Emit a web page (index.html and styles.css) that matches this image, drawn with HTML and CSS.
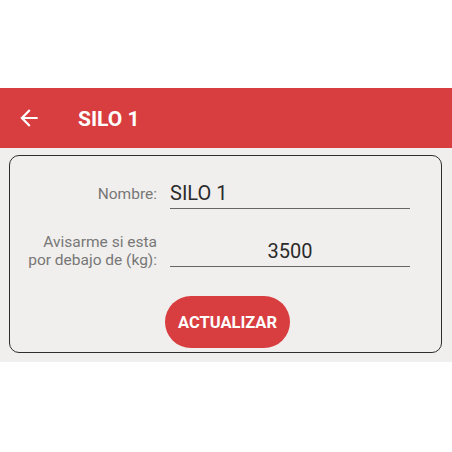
FILE: index.html
```html
<!DOCTYPE html>
<html lang="es">
<head>
  <meta charset="UTF-8">
  <meta name="viewport" content="width=device-width, initial-scale=1.0">
  <title>SILO 1</title>
  <link rel="stylesheet" href="styles.css">
</head>
<body>

  <div class="screen">
    <header class="appbar">
      <svg class="back" viewBox="0 0 24 24" width="26" height="26">
        <path d="M20 11H7.83l5.59-5.59L12 4l-8 8 8 8 1.41-1.41L7.83 13H20v-2z" fill="#ffffff"/>
      </svg>
      <h1>SILO 1</h1>
    </header>

    <main class="content">
      <div class="card">
        <div class="form">
          <label class="label" for="nombre">Nombre:</label>
          <input class="field" id="nombre" type="text" value="SILO 1">

          <label class="label" for="limite">Avisarme si esta<br>por debajo de (kg):</label>
          <input class="field center" id="limite" type="text" value="3500">
        </div>
        <div class="actions">
          <button class="btn">ACTUALIZAR</button>
        </div>
      </div>
    </main>
  </div>

</body>
</html>
```

FILE: styles.css
```css
* {
  margin: 0;
  padding: 0;
  box-sizing: border-box;
  font-family: 'Roboto', 'Liberation Sans', sans-serif;
}
body {
  background: #ffffff;
  color: #333;
}

.screen {
  padding-top: 88px;
}

/* barra superior */
.appbar {
  height: 60px;
  background-color: #d83d3f;
  display: flex;
  align-items: center;
  padding-left: 16px;
}
.back {
  display: block;
}
.appbar h1 {
  color: #ffffff;
  font-size: 21px;
  font-weight: 700;
  margin-left: 36px;
  margin-top: 2px;
}

.content {
  background-color: #f1efed;
  padding: 7px 10px 9px 9px;
}

.card {
  border: 1px solid #2e2e2e;
  border-radius: 10px;
  padding: 22px 0 4px 0;
}

/* formulario */
.form {
  display: grid;
  grid-template-columns: 147px 240px;
  column-gap: 13px;
  row-gap: 24px;
  align-items: center;
}
.label {
  text-align: right;
  font-size: 15.5px;
  line-height: 18px;
  color: #777;
}
.field {
  width: 100%;
  height: 31px;
  border: none;
  border-bottom: 1px solid #666;
  background: transparent;
  font-size: 20px;
  color: #2b2b2b;
  outline: none;
}
.field.center {
  text-align: center;
}

.actions {
  display: flex;
  justify-content: center;
  margin-top: 27px;
  padding-left: 4px;
}
.btn {
  width: 125px;
  height: 52px;
  border: none;
  border-radius: 26px;
  background-color: #d83d3f;
  color: #ffffff;
  font-size: 16.5px;
  font-weight: 700;
}
```
